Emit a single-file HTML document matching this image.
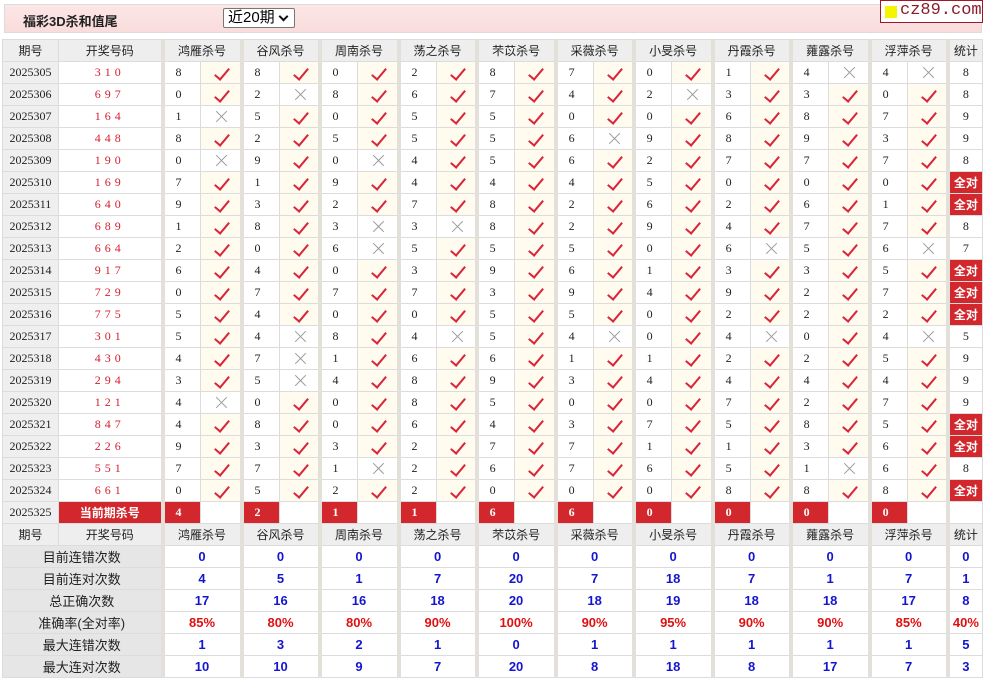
<!DOCTYPE html>
<html><head><meta charset="utf-8">
<style>
body{margin:0;background:#fff;width:984px;height:679px;overflow:hidden;font-family:"Liberation Serif","Noto Serif CJK SC",serif;}
.bar{position:absolute;left:4px;top:4px;width:976px;height:27px;border:1px solid #dcdcdc;background:linear-gradient(#fde6e6,#f9dcdc);}
.bar .t{position:absolute;left:18px;top:6px;font:bold 13px "Liberation Sans","Noto Sans CJK SC",sans-serif;color:#222;}
.sel{position:absolute;left:218px;top:3px;border:1px solid #777;background:#fff;border-radius:2px;font:15px "Liberation Sans","Noto Sans CJK SC",sans-serif;line-height:18px;padding-left:4px;box-sizing:border-box;width:72px;height:20px;}
.sel:after{content:"";position:absolute;right:7px;top:4px;width:5px;height:5px;border-right:2px solid #111;border-bottom:2px solid #111;transform:rotate(45deg);}
.logo{position:absolute;left:880px;top:0;width:101px;height:21px;border:1px solid #a01528;background:#fff;}
.logo i{position:absolute;left:4px;top:5px;width:12px;height:12px;background:#f5f500;}
.logo span{position:absolute;left:19px;top:0px;font:17px "Liberation Mono",monospace;color:#8a1a2a;}
table{position:absolute;left:2px;top:39px;border-collapse:collapse;table-layout:fixed;width:980px;}
td{border:1px solid #dcdcdc;height:21px;padding:0;font-size:12px;text-align:center;color:#222;overflow:hidden;white-space:nowrap;position:relative;}
tr.h td{background:#eeeeee;font-family:"Liberation Sans","Noto Sans CJK SC",sans-serif;font-size:12px;color:#222;}
td.q{background:#efefef;font-size:12px;}
td.c{color:#d42030;letter-spacing:4px;}
td.n{border-left:4px solid #e2e0d8;text-align:left;padding-left:11px;}
tr.h td.g{border-left:4px solid #e2e0d8;}
td.s{border-left:4px solid #e2e0d8;}
td.y{background:#fffcef;}
td.y:before{content:"";position:absolute;left:17px;top:3px;width:6px;height:13px;border-right:2px solid #d9263a;border-bottom:2px solid #d9263a;transform:rotate(40deg);}
td.x:before,td.x:after{content:"";position:absolute;left:13px;top:10px;width:15px;height:1px;background:#999;transform:rotate(45deg);}
td.x:after{transform:rotate(-45deg);}
td.a{background:#d2282d;color:#fff;font:bold 12px "Liberation Sans","Noto Sans CJK SC",sans-serif;}
td.rn{background:#d2282d;color:#fff;font-weight:bold;text-align:left;padding-left:11px;border-left:4px solid #e2e0d8;}
tr.st td{background:#fff;font:bold 13px "Liberation Sans",sans-serif;color:#1515d0;}
tr.st td.l{background:#e6e6e6;font:13px "Liberation Sans","Noto Sans CJK SC",sans-serif;color:#222;}
tr.pc td{color:#e01010;}
</style></head><body>
<div class="bar"><div class="t">福彩3D杀和值尾</div><div class="sel">近20期</div></div>
<div class="logo"><i></i><span>cz89.com</span></div>
<table>
<colgroup><col style="width:56px"><col style="width:104px">
<col style="width:38px"><col style="width:41px"><col style="width:38px"><col style="width:40px">
<col style="width:38px"><col style="width:41px"><col style="width:38px"><col style="width:40px">
<col style="width:38px"><col style="width:41px"><col style="width:38px"><col style="width:40px">
<col style="width:38px"><col style="width:41px"><col style="width:38px"><col style="width:40px">
<col style="width:38px"><col style="width:41px"><col style="width:38px"><col style="width:40px">
<col style="width:35px"></colgroup>
<tr class="h"><td>期号</td><td>开奖号码</td><td colspan="2" class="g">鸿雁杀号</td><td colspan="2" class="g">谷风杀号</td><td colspan="2" class="g">周南杀号</td><td colspan="2" class="g">荡之杀号</td><td colspan="2" class="g">芣苡杀号</td><td colspan="2" class="g">采薇杀号</td><td colspan="2" class="g">小旻杀号</td><td colspan="2" class="g">丹霞杀号</td><td colspan="2" class="g">蕹露杀号</td><td colspan="2" class="g">浮萍杀号</td><td class="g">统计</td></tr>
<tr><td class="q">2025305</td><td class="c">310</td><td class="n">8</td><td class="y"></td><td class="n">8</td><td class="y"></td><td class="n">0</td><td class="y"></td><td class="n">2</td><td class="y"></td><td class="n">8</td><td class="y"></td><td class="n">7</td><td class="y"></td><td class="n">0</td><td class="y"></td><td class="n">1</td><td class="y"></td><td class="n">4</td><td class="x"></td><td class="n">4</td><td class="x"></td><td class="s">8</td></tr>
<tr><td class="q">2025306</td><td class="c">697</td><td class="n">0</td><td class="y"></td><td class="n">2</td><td class="x"></td><td class="n">8</td><td class="y"></td><td class="n">6</td><td class="y"></td><td class="n">7</td><td class="y"></td><td class="n">4</td><td class="y"></td><td class="n">2</td><td class="x"></td><td class="n">3</td><td class="y"></td><td class="n">3</td><td class="y"></td><td class="n">0</td><td class="y"></td><td class="s">8</td></tr>
<tr><td class="q">2025307</td><td class="c">164</td><td class="n">1</td><td class="x"></td><td class="n">5</td><td class="y"></td><td class="n">0</td><td class="y"></td><td class="n">5</td><td class="y"></td><td class="n">5</td><td class="y"></td><td class="n">0</td><td class="y"></td><td class="n">0</td><td class="y"></td><td class="n">6</td><td class="y"></td><td class="n">8</td><td class="y"></td><td class="n">7</td><td class="y"></td><td class="s">9</td></tr>
<tr><td class="q">2025308</td><td class="c">448</td><td class="n">8</td><td class="y"></td><td class="n">2</td><td class="y"></td><td class="n">5</td><td class="y"></td><td class="n">5</td><td class="y"></td><td class="n">5</td><td class="y"></td><td class="n">6</td><td class="x"></td><td class="n">9</td><td class="y"></td><td class="n">8</td><td class="y"></td><td class="n">9</td><td class="y"></td><td class="n">3</td><td class="y"></td><td class="s">9</td></tr>
<tr><td class="q">2025309</td><td class="c">190</td><td class="n">0</td><td class="x"></td><td class="n">9</td><td class="y"></td><td class="n">0</td><td class="x"></td><td class="n">4</td><td class="y"></td><td class="n">5</td><td class="y"></td><td class="n">6</td><td class="y"></td><td class="n">2</td><td class="y"></td><td class="n">7</td><td class="y"></td><td class="n">7</td><td class="y"></td><td class="n">7</td><td class="y"></td><td class="s">8</td></tr>
<tr><td class="q">2025310</td><td class="c">169</td><td class="n">7</td><td class="y"></td><td class="n">1</td><td class="y"></td><td class="n">9</td><td class="y"></td><td class="n">4</td><td class="y"></td><td class="n">4</td><td class="y"></td><td class="n">4</td><td class="y"></td><td class="n">5</td><td class="y"></td><td class="n">0</td><td class="y"></td><td class="n">0</td><td class="y"></td><td class="n">0</td><td class="y"></td><td class="s a">全对</td></tr>
<tr><td class="q">2025311</td><td class="c">640</td><td class="n">9</td><td class="y"></td><td class="n">3</td><td class="y"></td><td class="n">2</td><td class="y"></td><td class="n">7</td><td class="y"></td><td class="n">8</td><td class="y"></td><td class="n">2</td><td class="y"></td><td class="n">6</td><td class="y"></td><td class="n">2</td><td class="y"></td><td class="n">6</td><td class="y"></td><td class="n">1</td><td class="y"></td><td class="s a">全对</td></tr>
<tr><td class="q">2025312</td><td class="c">689</td><td class="n">1</td><td class="y"></td><td class="n">8</td><td class="y"></td><td class="n">3</td><td class="x"></td><td class="n">3</td><td class="x"></td><td class="n">8</td><td class="y"></td><td class="n">2</td><td class="y"></td><td class="n">9</td><td class="y"></td><td class="n">4</td><td class="y"></td><td class="n">7</td><td class="y"></td><td class="n">7</td><td class="y"></td><td class="s">8</td></tr>
<tr><td class="q">2025313</td><td class="c">664</td><td class="n">2</td><td class="y"></td><td class="n">0</td><td class="y"></td><td class="n">6</td><td class="x"></td><td class="n">5</td><td class="y"></td><td class="n">5</td><td class="y"></td><td class="n">5</td><td class="y"></td><td class="n">0</td><td class="y"></td><td class="n">6</td><td class="x"></td><td class="n">5</td><td class="y"></td><td class="n">6</td><td class="x"></td><td class="s">7</td></tr>
<tr><td class="q">2025314</td><td class="c">917</td><td class="n">6</td><td class="y"></td><td class="n">4</td><td class="y"></td><td class="n">0</td><td class="y"></td><td class="n">3</td><td class="y"></td><td class="n">9</td><td class="y"></td><td class="n">6</td><td class="y"></td><td class="n">1</td><td class="y"></td><td class="n">3</td><td class="y"></td><td class="n">3</td><td class="y"></td><td class="n">5</td><td class="y"></td><td class="s a">全对</td></tr>
<tr><td class="q">2025315</td><td class="c">729</td><td class="n">0</td><td class="y"></td><td class="n">7</td><td class="y"></td><td class="n">7</td><td class="y"></td><td class="n">7</td><td class="y"></td><td class="n">3</td><td class="y"></td><td class="n">9</td><td class="y"></td><td class="n">4</td><td class="y"></td><td class="n">9</td><td class="y"></td><td class="n">2</td><td class="y"></td><td class="n">7</td><td class="y"></td><td class="s a">全对</td></tr>
<tr><td class="q">2025316</td><td class="c">775</td><td class="n">5</td><td class="y"></td><td class="n">4</td><td class="y"></td><td class="n">0</td><td class="y"></td><td class="n">0</td><td class="y"></td><td class="n">5</td><td class="y"></td><td class="n">5</td><td class="y"></td><td class="n">0</td><td class="y"></td><td class="n">2</td><td class="y"></td><td class="n">2</td><td class="y"></td><td class="n">2</td><td class="y"></td><td class="s a">全对</td></tr>
<tr><td class="q">2025317</td><td class="c">301</td><td class="n">5</td><td class="y"></td><td class="n">4</td><td class="x"></td><td class="n">8</td><td class="y"></td><td class="n">4</td><td class="x"></td><td class="n">5</td><td class="y"></td><td class="n">4</td><td class="x"></td><td class="n">0</td><td class="y"></td><td class="n">4</td><td class="x"></td><td class="n">0</td><td class="y"></td><td class="n">4</td><td class="x"></td><td class="s">5</td></tr>
<tr><td class="q">2025318</td><td class="c">430</td><td class="n">4</td><td class="y"></td><td class="n">7</td><td class="x"></td><td class="n">1</td><td class="y"></td><td class="n">6</td><td class="y"></td><td class="n">6</td><td class="y"></td><td class="n">1</td><td class="y"></td><td class="n">1</td><td class="y"></td><td class="n">2</td><td class="y"></td><td class="n">2</td><td class="y"></td><td class="n">5</td><td class="y"></td><td class="s">9</td></tr>
<tr><td class="q">2025319</td><td class="c">294</td><td class="n">3</td><td class="y"></td><td class="n">5</td><td class="x"></td><td class="n">4</td><td class="y"></td><td class="n">8</td><td class="y"></td><td class="n">9</td><td class="y"></td><td class="n">3</td><td class="y"></td><td class="n">4</td><td class="y"></td><td class="n">4</td><td class="y"></td><td class="n">4</td><td class="y"></td><td class="n">4</td><td class="y"></td><td class="s">9</td></tr>
<tr><td class="q">2025320</td><td class="c">121</td><td class="n">4</td><td class="x"></td><td class="n">0</td><td class="y"></td><td class="n">0</td><td class="y"></td><td class="n">8</td><td class="y"></td><td class="n">5</td><td class="y"></td><td class="n">0</td><td class="y"></td><td class="n">0</td><td class="y"></td><td class="n">7</td><td class="y"></td><td class="n">2</td><td class="y"></td><td class="n">7</td><td class="y"></td><td class="s">9</td></tr>
<tr><td class="q">2025321</td><td class="c">847</td><td class="n">4</td><td class="y"></td><td class="n">8</td><td class="y"></td><td class="n">0</td><td class="y"></td><td class="n">6</td><td class="y"></td><td class="n">4</td><td class="y"></td><td class="n">3</td><td class="y"></td><td class="n">7</td><td class="y"></td><td class="n">5</td><td class="y"></td><td class="n">8</td><td class="y"></td><td class="n">5</td><td class="y"></td><td class="s a">全对</td></tr>
<tr><td class="q">2025322</td><td class="c">226</td><td class="n">9</td><td class="y"></td><td class="n">3</td><td class="y"></td><td class="n">3</td><td class="y"></td><td class="n">2</td><td class="y"></td><td class="n">7</td><td class="y"></td><td class="n">7</td><td class="y"></td><td class="n">1</td><td class="y"></td><td class="n">1</td><td class="y"></td><td class="n">3</td><td class="y"></td><td class="n">6</td><td class="y"></td><td class="s a">全对</td></tr>
<tr><td class="q">2025323</td><td class="c">551</td><td class="n">7</td><td class="y"></td><td class="n">7</td><td class="y"></td><td class="n">1</td><td class="x"></td><td class="n">2</td><td class="y"></td><td class="n">6</td><td class="y"></td><td class="n">7</td><td class="y"></td><td class="n">6</td><td class="y"></td><td class="n">5</td><td class="y"></td><td class="n">1</td><td class="x"></td><td class="n">6</td><td class="y"></td><td class="s">8</td></tr>
<tr><td class="q">2025324</td><td class="c">661</td><td class="n">0</td><td class="y"></td><td class="n">5</td><td class="y"></td><td class="n">2</td><td class="y"></td><td class="n">2</td><td class="y"></td><td class="n">0</td><td class="y"></td><td class="n">0</td><td class="y"></td><td class="n">0</td><td class="y"></td><td class="n">8</td><td class="y"></td><td class="n">8</td><td class="y"></td><td class="n">8</td><td class="y"></td><td class="s a">全对</td></tr>
<tr><td class="q">2025325</td><td class="a">当前期杀号</td><td class="rn">4</td><td></td><td class="rn">2</td><td></td><td class="rn">1</td><td></td><td class="rn">1</td><td></td><td class="rn">6</td><td></td><td class="rn">6</td><td></td><td class="rn">0</td><td></td><td class="rn">0</td><td></td><td class="rn">0</td><td></td><td class="rn">0</td><td></td><td class="s"></td></tr>
<tr class="h"><td>期号</td><td>开奖号码</td><td colspan="2" class="g">鸿雁杀号</td><td colspan="2" class="g">谷风杀号</td><td colspan="2" class="g">周南杀号</td><td colspan="2" class="g">荡之杀号</td><td colspan="2" class="g">芣苡杀号</td><td colspan="2" class="g">采薇杀号</td><td colspan="2" class="g">小旻杀号</td><td colspan="2" class="g">丹霞杀号</td><td colspan="2" class="g">蕹露杀号</td><td colspan="2" class="g">浮萍杀号</td><td class="g">统计</td></tr>
<tr class="st"><td colspan="2" class="l">目前连错次数</td><td colspan="2" class="s">0</td><td colspan="2" class="s">0</td><td colspan="2" class="s">0</td><td colspan="2" class="s">0</td><td colspan="2" class="s">0</td><td colspan="2" class="s">0</td><td colspan="2" class="s">0</td><td colspan="2" class="s">0</td><td colspan="2" class="s">0</td><td colspan="2" class="s">0</td><td class="s">0</td></tr>
<tr class="st"><td colspan="2" class="l">目前连对次数</td><td colspan="2" class="s">4</td><td colspan="2" class="s">5</td><td colspan="2" class="s">1</td><td colspan="2" class="s">7</td><td colspan="2" class="s">20</td><td colspan="2" class="s">7</td><td colspan="2" class="s">18</td><td colspan="2" class="s">7</td><td colspan="2" class="s">1</td><td colspan="2" class="s">7</td><td class="s">1</td></tr>
<tr class="st"><td colspan="2" class="l">总正确次数</td><td colspan="2" class="s">17</td><td colspan="2" class="s">16</td><td colspan="2" class="s">16</td><td colspan="2" class="s">18</td><td colspan="2" class="s">20</td><td colspan="2" class="s">18</td><td colspan="2" class="s">19</td><td colspan="2" class="s">18</td><td colspan="2" class="s">18</td><td colspan="2" class="s">17</td><td class="s">8</td></tr>
<tr class="st pc"><td colspan="2" class="l">准确率(全对率)</td><td colspan="2" class="s">85%</td><td colspan="2" class="s">80%</td><td colspan="2" class="s">80%</td><td colspan="2" class="s">90%</td><td colspan="2" class="s">100%</td><td colspan="2" class="s">90%</td><td colspan="2" class="s">95%</td><td colspan="2" class="s">90%</td><td colspan="2" class="s">90%</td><td colspan="2" class="s">85%</td><td class="s">40%</td></tr>
<tr class="st"><td colspan="2" class="l">最大连错次数</td><td colspan="2" class="s">1</td><td colspan="2" class="s">3</td><td colspan="2" class="s">2</td><td colspan="2" class="s">1</td><td colspan="2" class="s">0</td><td colspan="2" class="s">1</td><td colspan="2" class="s">1</td><td colspan="2" class="s">1</td><td colspan="2" class="s">1</td><td colspan="2" class="s">1</td><td class="s">5</td></tr>
<tr class="st"><td colspan="2" class="l">最大连对次数</td><td colspan="2" class="s">10</td><td colspan="2" class="s">10</td><td colspan="2" class="s">9</td><td colspan="2" class="s">7</td><td colspan="2" class="s">20</td><td colspan="2" class="s">8</td><td colspan="2" class="s">18</td><td colspan="2" class="s">8</td><td colspan="2" class="s">17</td><td colspan="2" class="s">7</td><td class="s">3</td></tr>
</table>
</body></html>
